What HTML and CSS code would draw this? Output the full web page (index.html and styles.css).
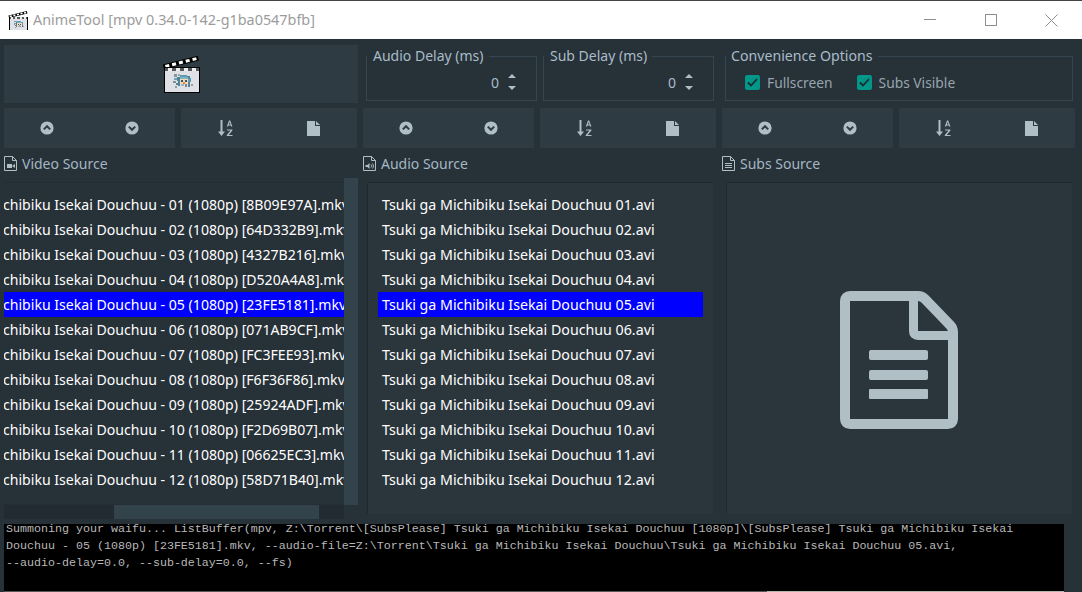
FILE: index.html
```html
<!DOCTYPE html>
<html lang="en">
<head>
<meta charset="utf-8">
<title>AnimeTool</title>
<link rel="stylesheet" href="styles.css">
</head>
<body>
<svg class="defs" width="0" height="0" aria-hidden="true">
  <symbol id="clap" viewBox="0 0 38 40" shape-rendering="crispEdges">
    <g transform="rotate(-14 19 9)" shape-rendering="auto">
      <rect x="1" y="6" width="36" height="5" fill="#000"/>
      <rect x="3" y="7" width="4" height="3" fill="#fff"/><rect x="10" y="7" width="4" height="3" fill="#fff"/><rect x="17" y="7" width="4" height="3" fill="#fff"/><rect x="24" y="7" width="4" height="3" fill="#fff"/><rect x="31" y="7" width="4" height="3" fill="#fff"/>
    </g>
    <rect x="2" y="13" width="36" height="26" fill="#000"/>
    <rect x="3" y="14" width="34" height="24" fill="#dfe1e6"/>
    <rect x="3" y="14" width="34" height="3" fill="#55585c"/>
    <rect x="6" y="14" width="4" height="3" fill="#eee"/><rect x="14" y="14" width="4" height="3" fill="#eee"/><rect x="22" y="14" width="4" height="3" fill="#eee"/><rect x="30" y="14" width="4" height="3" fill="#eee"/>
    <rect x="12" y="20" width="3" height="3" fill="#8a9498"/>
    <rect x="16" y="20" width="2" height="2" fill="#9aa4a8"/>
    <rect x="18" y="21" width="7" height="2" fill="#5f9cb0"/>
    <rect x="25" y="22" width="3" height="2" fill="#4f8497"/>
    <rect x="12" y="24" width="3" height="2" fill="#6ea5b8"/>
    <rect x="15" y="23" width="3" height="4" fill="#4f8497"/>
    <rect x="18" y="23" width="8" height="2" fill="#7fb4c6"/>
    <rect x="26" y="24" width="3" height="4" fill="#5f9cb0"/>
    <rect x="18" y="25" width="8" height="5" fill="#f3d9bd"/>
    <rect x="19" y="26" width="2" height="2" fill="#33536a"/><rect x="23" y="26" width="2" height="2" fill="#33536a"/>
    <rect x="21" y="28" width="2" height="2" fill="#e8892e"/>
    <rect x="11" y="27" width="3" height="2" fill="#77909c"/>
    <rect x="14" y="29" width="3" height="2" fill="#5f7f90"/>
    <rect x="16" y="27" width="2" height="5" fill="#4f8497"/>
    <rect x="19" y="30" width="3" height="2" fill="#a8b4ba"/>
    <rect x="23" y="30" width="2" height="3" fill="#6f8a98"/>
    <rect x="26" y="28" width="2" height="5" fill="#5f7f90"/>
    <rect x="29" y="30" width="2" height="2" fill="#8fa0a8"/>
    <rect x="13" y="32" width="2" height="2" fill="#8fa0a8"/>
  </symbol>
  <symbol id="up" viewBox="0 0 14 14"><circle cx="7" cy="7" r="6.6" fill="#b0bec5"/><path d="M3.8 8.400 7 5.200l3.200 3.200" fill="none" stroke="#2e3b43" stroke-width="2"/></symbol>
  <symbol id="down" viewBox="0 0 14 14"><circle cx="7" cy="7" r="6.6" fill="#b0bec5"/><path d="M3.800 5.600 7 8.800l3.200-3.200" fill="none" stroke="#2e3b43" stroke-width="2"/></symbol>
  <symbol id="sort" viewBox="0 0 15 16"><path d="M2.500 0h2v11.500H7L3.500 16 0 11.500h2.500z" fill="#b0bec5"/><path d="M8.800 6.600 11 .6h1.200l2.200 6h-1.300l-.4-1.200h-2.300l-.4 1.200zm2.100-2.200h1.600l-.8-2.300zM9 9.400h5.400v1L10.700 15h3.800v1H8.800v-1l3.700-4.600H9z" fill="#b0bec5"/></symbol>
  <symbol id="file" viewBox="0 0 13 15"><path d="M0 0h8v5h5v10H0zM9 0l4 4H9z" fill="#b0bec5"/></symbol>
</svg>

<header class="titlebar">
  <svg class="app-icon"><use href="#clap"/></svg>
  <span class="app-title">AnimeTool [mpv 0.34.0-142-g1ba0547bfb]</span>
  <div class="win-controls">
    <span class="win-btn"><svg width="12" height="12" viewBox="0 0 12 12"><path d="M0 5.500h12" stroke="#8f8f8f" stroke-width="1"/></svg></span>
    <span class="win-btn"><svg width="12" height="12" viewBox="0 0 12 12"><rect x=".5" y=".5" width="11" height="11" fill="none" stroke="#8f8f8f"/></svg></span>
    <span class="win-btn"><svg width="13" height="13" viewBox="0 0 13 13"><path d="M.5.5l12 12M12.500.5l-12 12" stroke="#8f8f8f" fill="none"/></svg></span>
  </div>
</header>

<main class="app">
  <section class="top-grid">
    <button class="launch"><svg class="launch-icon"><use href="#clap"/></svg></button>
    <div class="delays">
      <fieldset class="group">
        <legend>Audio Delay (ms)</legend>
        <div class="spin"><span>0</span><span class="arrows"><i class="tri-up"></i><i class="tri-down"></i></span></div>
      </fieldset>
      <fieldset class="group">
        <legend>Sub Delay (ms)</legend>
        <div class="spin"><span>0</span><span class="arrows"><i class="tri-up"></i><i class="tri-down"></i></span></div>
      </fieldset>
    </div>
    <div class="delays">
      <fieldset class="group group-wide">
        <legend>Convenience Options</legend>
        <div class="checks">
          <label class="check"><span class="box"><svg width="15" height="15" viewBox="0 0 15 15"><path d="M3 7.500l3 3 6-6.500" fill="none" stroke="#1f2a30" stroke-width="1.8"/></svg></span>Fullscreen</label>
          <label class="check"><span class="box"><svg width="15" height="15" viewBox="0 0 15 15"><path d="M3 7.500l3 3 6-6.500" fill="none" stroke="#1f2a30" stroke-width="1.8"/></svg></span>Subs Visible</label>
        </div>
      </fieldset>
    </div>
  </section>

  <section class="tool-grid">
    <div class="tools"><div class="tool-btn"><svg class="ico14"><use href="#up"/></svg><svg class="ico14"><use href="#down"/></svg></div><div class="tool-btn tool-btn-r"><svg class="ico-sort"><use href="#sort"/></svg><svg class="ico-file"><use href="#file"/></svg></div></div>
    <div class="tools"><div class="tool-btn"><svg class="ico14"><use href="#up"/></svg><svg class="ico14"><use href="#down"/></svg></div><div class="tool-btn tool-btn-r"><svg class="ico-sort"><use href="#sort"/></svg><svg class="ico-file"><use href="#file"/></svg></div></div>
    <div class="tools"><div class="tool-btn"><svg class="ico14"><use href="#up"/></svg><svg class="ico14"><use href="#down"/></svg></div><div class="tool-btn tool-btn-r"><svg class="ico-sort"><use href="#sort"/></svg><svg class="ico-file"><use href="#file"/></svg></div></div>
  </section>

  <section class="source-grid">
    <div class="source">
      <h2 class="source-label"><svg class="label-ico" viewBox="0 0 13 15"><path d="M.5.5h8l4 4v10H.5z" fill="none" stroke="#b0bec5"/><path d="M8.500.5v4h4" fill="none" stroke="#b0bec5"/><rect x="3" y="8" width="5" height="4" fill="#b0bec5"/><path d="M8 10l3-2v4z" fill="#b0bec5"/></svg>Video Source</h2>
      <div class="video-wrap">
        <div class="video-main">
          <ul class="list list-video">
            <li>chibiku Isekai Douchuu - 01 (1080p) [8B09E97A].mkv</li>
            <li>chibiku Isekai Douchuu - 02 (1080p) [64D332B9].mkv</li>
            <li>chibiku Isekai Douchuu - 03 (1080p) [4327B216].mkv</li>
            <li>chibiku Isekai Douchuu - 04 (1080p) [D520A4A8].mkv</li>
            <li class="sel">chibiku Isekai Douchuu - 05 (1080p) [23FE5181].mkv</li>
            <li>chibiku Isekai Douchuu - 06 (1080p) [071AB9CF].mkv</li>
            <li>chibiku Isekai Douchuu - 07 (1080p) [FC3FEE93].mkv</li>
            <li>chibiku Isekai Douchuu - 08 (1080p) [F6F36F86].mkv</li>
            <li>chibiku Isekai Douchuu - 09 (1080p) [25924ADF].mkv</li>
            <li>chibiku Isekai Douchuu - 10 (1080p) [F2D69B07].mkv</li>
            <li>chibiku Isekai Douchuu - 11 (1080p) [06625EC3].mkv</li>
            <li>chibiku Isekai Douchuu - 12 (1080p) [58D71B40].mkv</li>
          </ul>
          <div class="hscroll"><span class="hthumb"></span></div>
        </div>
        <div class="vscroll"></div>
      </div>
    </div>
    <div class="source">
      <h2 class="source-label"><svg class="label-ico" viewBox="0 0 13 15"><path d="M.5.5h8l4 4v10H.5z" fill="none" stroke="#b0bec5"/><path d="M8.500.5v4h4" fill="none" stroke="#b0bec5"/><path d="M2.500 9h2l2-2v6l-2-2h-2z" fill="#b0bec5"/><path d="M8 8.500c.7 1 .7 2 0 3M9.500 7.500c1.200 1.600 1.200 3.400 0 5" fill="none" stroke="#b0bec5"/></svg>Audio Source</h2>
      <div class="panel">
        <ul class="list list-audio">
          <li>Tsuki ga Michibiku Isekai Douchuu 01.avi</li>
          <li>Tsuki ga Michibiku Isekai Douchuu 02.avi</li>
          <li>Tsuki ga Michibiku Isekai Douchuu 03.avi</li>
          <li>Tsuki ga Michibiku Isekai Douchuu 04.avi</li>
          <li class="sel">Tsuki ga Michibiku Isekai Douchuu 05.avi</li>
          <li>Tsuki ga Michibiku Isekai Douchuu 06.avi</li>
          <li>Tsuki ga Michibiku Isekai Douchuu 07.avi</li>
          <li>Tsuki ga Michibiku Isekai Douchuu 08.avi</li>
          <li>Tsuki ga Michibiku Isekai Douchuu 09.avi</li>
          <li>Tsuki ga Michibiku Isekai Douchuu 10.avi</li>
          <li>Tsuki ga Michibiku Isekai Douchuu 11.avi</li>
          <li>Tsuki ga Michibiku Isekai Douchuu 12.avi</li>
        </ul>
      </div>
    </div>
    <div class="source">
      <h2 class="source-label"><svg class="label-ico" viewBox="0 0 13 15"><path d="M.5.5h8l4 4v10H.5z" fill="none" stroke="#b0bec5"/><path d="M8.500.5v4h4" fill="none" stroke="#b0bec5"/><path d="M3 7.500h7M3 9.500h7M3 11.500h7" stroke="#b0bec5"/></svg>Subs Source</h2>
      <div class="panel panel-center">
        <svg class="big-doc" viewBox="0 0 118 138">
          <path d="M10 5h68c3 0 5 1 7 3l25 26c2 2 3 4 3 7v87c0 3-2 5-5 5H10c-3 0-5-2-5-5V10c0-3 2-5 5-5z" fill="none" stroke="#b0bec5" stroke-width="10"/>
          <path d="M73.500 6v34c0 3 1.500 4.500 4.500 4.500h35" fill="none" stroke="#b0bec5" stroke-width="9"/>
          <rect x="29" y="59" width="59" height="10" rx="2" fill="#b0bec5"/>
          <rect x="29" y="79" width="59" height="10" rx="2" fill="#b0bec5"/>
          <rect x="29" y="98" width="59" height="10" rx="1" fill="#b0bec5"/>
        </svg>
      </div>
    </div>
  </section>

  <section class="console-row">
    <pre class="console"><code class="console-text">Summoning your waifu... ListBuffer(mpv, Z:\Torrent\[SubsPlease] Tsuki ga Michibiku Isekai Douchuu [1080p]\[SubsPlease] Tsuki ga Michibiku Isekai
Douchuu - 05 (1080p) [23FE5181].mkv, --audio-file=Z:\Torrent\Tsuki ga Michibiku Isekai Douchuu\Tsuki ga Michibiku Isekai Douchuu 05.avi,
--audio-delay=0.0, --sub-delay=0.0, --fs)</code></pre>
    <div class="console-edge"></div>
  </section>
</main>
</body>
</html>
```
FILE: styles.css
```css
* { box-sizing: border-box; }
html, body { margin: 0; padding: 0; height: 592px; overflow: hidden; }
body { background: #273138; font-family: "Noto Sans", sans-serif; color: #a9bcc8; display: flex; flex-direction: column; }
.defs { position: absolute; }

.titlebar { height: 39px; flex: none; background: #fff; border-top: 1px solid #454545; display: flex; align-items: center; padding-left: 8px; }
.app-icon { width: 20px; height: 21px; margin-right: 5px; }
.app-title { font-size: 14.4px; color: #9c9c9c; margin-top: -1px; }
.win-controls { margin-left: auto; display: flex; }
.win-btn { width: 61px; display: flex; justify-content: center; align-items: center; }

.app { flex: 1; display: flex; flex-direction: column; padding: 6px 6px 0 4px; min-height: 0; }
.app > section { flex: none; }

.top-grid, .tool-grid, .source-grid { display: grid; grid-template-columns: repeat(3, 354px); column-gap: 5px; }
.top-grid { height: 58px; }
.launch { border: 0; padding: 0; background: #2e3b43; display: flex; align-items: center; justify-content: center; }
.launch-icon { width: 38px; height: 40px; }
.delays { display: flex; gap: 6px; padding: 0 3px; }
.group { flex: 1; margin: 1px 0 0; padding: 0; border: 1px solid #364650; border-radius: 0; min-width: 0; height: 55px; }
.group legend { font-size: 14px; line-height: 20px; padding: 0 5px 0 6px; margin-left: 0; color: #a9bcc8; height: 20px; }
.group-wide legend { font-size: 14.15px; padding-left: 5px; }
.spin { display: flex; justify-content: flex-end; align-items: center; gap: 9px; height: 26px; padding-right: 20px; margin-top: 3px; font-size: 14px; }
.arrows { display: flex; flex-direction: column; gap: 8px; }
.tri-up, .tri-down { display: block; width: 0; height: 0; border-left: 4.5px solid transparent; border-right: 4.5px solid transparent; }
.tri-up { border-bottom: 4px solid #b0bec5; }
.tri-down { border-top: 4px solid #b0bec5; }
.checks { display: flex; gap: 24px; padding-left: 19px; height: 26px; align-items: center; margin-top: 3px; }
.check { display: flex; align-items: center; gap: 7px; font-size: 13.8px; color: #97a5ae; }
.box { width: 15px; height: 15px; background: #009688; border-radius: 2px; display: block; }
.box svg { display: block; }

.tool-grid { margin-top: 5px; height: 40px; }
.tools { display: flex; gap: 6px; }
.tool-btn { width: 171px; height: 40px; background: #2e3b43; display: flex; align-items: center; justify-content: space-around; }
.tool-btn-r { width: 176px; }
.ico14 { width: 14px; height: 14px; }
.ico-sort { width: 15px; height: 16px; }
.ico-file { width: 13px; height: 15px; }

.source-grid { margin-top: 5px; }
.source { min-width: 0; }
.source-label { margin: 0; height: 25px; font-size: 14px; font-weight: 400; display: flex; align-items: center; gap: 5px; color: #a3b7c4; padding-bottom: 5px; }
.label-ico { width: 13px; height: 15px; flex: none; }

.video-wrap { display: flex; height: 341px; }
.video-main { width: 340px; display: flex; flex-direction: column; }
.vscroll { width: 14px; height: 327px; background: #33434c; }
.list { list-style: none; margin: 0; padding: 0; color: #fff; font-size: 14.22px; }
.list li { height: 25px; line-height: 25px; white-space: nowrap; overflow: hidden; }
.list .sel { background: #0000ff; }
.list-video { flex: none; height: 323px; margin-top: 4px; padding-top: 9px; border-top: 1px solid #222c32; border-bottom: 1px solid #242e34; font-size: 14.1px; }
.list-video li { text-indent: -1px; }
.hscroll { height: 14px; background: #222b31; padding-left: 110px; }
.hthumb { display: block; width: 205px; height: 14px; background: #33434c; }

.panel { margin: 5px 4px 0 5px; height: 331px; background: #2a353c; box-shadow: 0 -1px 0 #20282e, -1px 0 0 #20282e; padding: 9px 10px 0; }
.list-audio li { padding-left: 4px; }
.panel-center { display: flex; justify-content: center; align-items: flex-start; padding: 108px 1px 0 0; }
.big-doc { width: 118px; height: 138px; display: block; }

.console-row { margin-top: 5px; width: 1060px; }
.console { margin: 0; height: 67px; background: #000; color: #b8b8b8; font-family: "Liberation Mono", monospace; font-size: 11.67px; line-height: 17px; padding: 0 2px; overflow: hidden; }
.console-text { display: block; margin-top: -3px; font: inherit; }
.console-edge { height: 1px; background: linear-gradient(to right, #555 72%, #b5b5ad 72%); }
```
